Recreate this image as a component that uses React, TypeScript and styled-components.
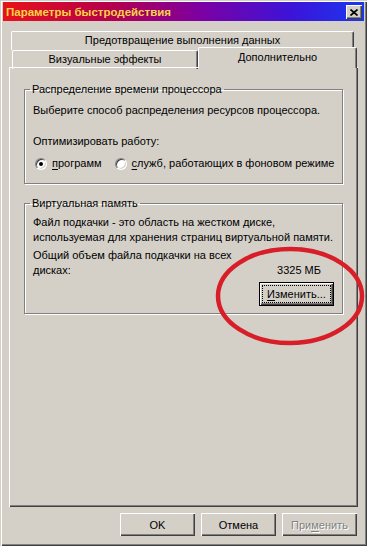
import styled, { createGlobalStyle } from 'styled-components';

const face = '#d4d0c8';
const shadow = '#808080';
const darkShadow = '#404040';

const GlobalStyle = createGlobalStyle`
  html, body {
    margin: 0;
    padding: 0;
    background: ${face};
  }
  body {
    font-family: 'Liberation Sans', Arial, sans-serif;
    font-size: 11px;
    color: #000;
  }
`;

const Window = styled.div`
  position: relative;
  width: 367px;
  height: 546px;
  box-sizing: border-box;
  padding: 2px 3px 3px 3px;
  background: ${face};
  box-shadow: inset 1px 1px 0 ${face}, inset 2px 2px 0 #fff, inset -1px -1px 0 ${darkShadow},
    inset -2px -2px 0 ${shadow};
  display: flex;
  flex-direction: column;
`;

const TitleBar = styled.div`
  height: 19px;
  display: flex;
  align-items: center;
  justify-content: space-between;
  padding: 0 2px 0 3px;
  background: linear-gradient(90deg, #e8121a 0%, #b4004c 30%, #7c00a4 55%, #3c14d8 80%, #1a38f0 100%);
`;

const TitleText = styled.span`
  color: #f8d448;
  font-weight: bold;
  font-size: 11.5px;
`;

const CloseButton = styled.button`
  width: 16px;
  height: 14px;
  margin-top: 1px;
  padding: 0;
  border: none;
  background: ${face};
  box-shadow: inset 1px 1px 0 #fff, inset -1px -1px 0 ${darkShadow}, inset -2px -2px 0 ${shadow};
  display: flex;
  align-items: center;
  justify-content: center;
`;

const Body = styled.div`
  display: flex;
  flex-direction: column;
  padding: 10px 6px 0;
`;

const TabRow = styled.div<{ $offset: number; $height: number }>`
  display: flex;
  height: ${(p) => p.$height}px;
  padding-left: ${(p) => p.$offset}px;
`;

const Tab = styled.div<{ $width: number; $selected?: boolean }>`
  position: ${(p) => (p.$selected ? 'relative' : 'static')};
  z-index: ${(p) => (p.$selected ? 2 : 'auto')};
  width: ${(p) => p.$width}px;
  height: ${(p) => (p.$selected ? 21 : 19)}px;
  margin-top: ${(p) => (p.$selected ? -3 : 0)}px;
  box-sizing: border-box;
  background: ${face};
  border-top: 1px solid #fff;
  border-left: 1px solid #fff;
  border-right: 1px solid ${darkShadow};
  border-radius: 2px 2px 0 0;
  box-shadow: inset -1px 0 0 ${shadow};
  display: flex;
  align-items: center;
  justify-content: center;
  padding-bottom: ${(p) => (p.$selected ? 3 : 2)}px;
  white-space: nowrap;
`;

const Panel = styled.div`
  height: 440px;
  box-sizing: border-box;
  padding: 15px 15px;
  box-shadow: inset 1px 1px 0 #fff, inset -1px -1px 0 ${darkShadow}, inset -2px -2px 0 ${shadow};
  display: flex;
  flex-direction: column;
  gap: 12px;
`;

const GroupBox = styled.fieldset`
  margin: 0;
  padding: 0 8px 0;
  border: 1px solid ${shadow};
  box-shadow: inset 1px 1px 0 #fff, 1px 1px 0 #fff;
  min-width: 0;
`;

const Legend = styled.legend`
  padding: 0 2px;
  margin-left: -3px;
  line-height: 14px;
`;

const Line = styled.p<{ $top: number }>`
  margin: ${(p) => p.$top}px 0 0;
  line-height: 15px;
  white-space: nowrap;
`;

const RadioRow = styled.div`
  display: flex;
  align-items: center;
  margin: 7px 0 12px 2px;
  line-height: 15px;
  white-space: nowrap;
`;

const RadioLabel = styled.label`
  display: flex;
  align-items: center;
  gap: 5px;
  margin-right: 13px;
`;

const RadioCircle = styled.span<{ $checked?: boolean }>`
  width: 12px;
  height: 12px;
  box-sizing: border-box;
  border-radius: 50%;
  background: #fff;
  border: 1px solid;
  border-color: ${shadow} #fff #fff ${shadow};
  box-shadow: inset 1px 1px 0 ${darkShadow}, inset -1px -1px 0 ${face};
  display: flex;
  align-items: center;
  justify-content: center;

  &::after {
    content: '';
    width: 4px;
    height: 4px;
    border-radius: 50%;
    background: #000;
    display: ${(p) => (p.$checked ? 'block' : 'none')};
  }
`;

const Accel = styled.span`
  text-decoration: underline;
  text-underline-offset: 2px;
`;

const TotalRow = styled.div`
  display: flex;
  justify-content: space-between;
  align-items: flex-end;
  margin-top: 3px;
  line-height: 15px;
`;

const TotalLabel = styled.span`
  width: 215px;
`;

const TotalValue = styled.span`
  margin-right: 13px;
`;

const ActionRow = styled.div<{ $gap: number }>`
  display: flex;
  justify-content: flex-end;
  gap: ${(p) => p.$gap}px;
`;

const ChangeRow = styled(ActionRow)`
  margin: 4px 0 7px;
`;

const Button = styled.button<{ $default?: boolean; $disabled?: boolean }>`
  width: 75px;
  height: ${(p) => (p.$default ? 24 : 23)}px;
  padding: 0;
  font-family: 'Liberation Sans', Arial, sans-serif;
  font-size: 11px;
  color: ${(p) => (p.$disabled ? shadow : '#000')};
  text-shadow: ${(p) => (p.$disabled ? '1px 1px 0 #fff' : 'none')};
  background: ${face};
  border: ${(p) => (p.$default ? '1px solid #000' : 'none')};
  box-shadow: inset 1px 1px 0 #fff, inset -1px -1px 0 ${darkShadow}, inset -2px -2px 0 ${shadow};
  display: flex;
  align-items: center;
  justify-content: center;
`;

const FocusRect = styled.span`
  border: 1px dotted #000;
  padding: 1px 4px;
  line-height: 14px;
`;

const ButtonBar = styled(ActionRow)`
  margin-top: 6px;
  padding-right: 1px;
`;

const Annotation = styled.svg`
  position: absolute;
  left: 214px;
  top: 246px;
  pointer-events: none;
`;

export default function App() {
  return (
    <Window>
      <GlobalStyle />
      <TitleBar>
        <TitleText>Параметры быстродействия</TitleText>
        <CloseButton aria-label="Закрыть">
          <svg width="8" height="7" viewBox="0 0 8 7">
            <path d="M0.5 0.5 L7.5 6.5 M7.5 0.5 L0.5 6.5" stroke="#000" strokeWidth="1.7" fill="none" />
          </svg>
        </CloseButton>
      </TitleBar>
      <Body>
        <TabRow $offset={2} $height={19}>
          <Tab $width={343}>Предотвращение выполнения данных</Tab>
        </TabRow>
        <TabRow $offset={3} $height={17}>
          <Tab $width={186}>Визуальные эффекты</Tab>
          <Tab $width={159} $selected>
            Дополнительно
          </Tab>
        </TabRow>
        <Panel>
          <GroupBox>
            <Legend>Распределение времени процессора</Legend>
            <Line $top={7}>Выберите способ распределения ресурсов процессора.</Line>
            <Line $top={16}>Оптимизировать работу:</Line>
            <RadioRow>
              <RadioLabel>
                <RadioCircle $checked />
                <span>
                  <Accel>п</Accel>рограмм
                </span>
              </RadioLabel>
              <RadioLabel>
                <RadioCircle />
                <span>
                  <Accel>с</Accel>лужб, работающих в фоновом режиме
                </span>
              </RadioLabel>
            </RadioRow>
          </GroupBox>
          <GroupBox>
            <Legend>Виртуальная память</Legend>
            <Line $top={5}>
              Файл подкачки - это область на жестком диске,
              <br />
              используемая для хранения страниц виртуальной памяти.
            </Line>
            <TotalRow>
              <TotalLabel>Общий объем файла подкачки на всех дисках:</TotalLabel>
              <TotalValue>3325 МБ</TotalValue>
            </TotalRow>
            <ChangeRow $gap={0}>
              <Button $default>
                <FocusRect>
                  <Accel>И</Accel>зменить...
                </FocusRect>
              </Button>
            </ChangeRow>
          </GroupBox>
        </Panel>
        <ButtonBar $gap={6}>
          <Button>OK</Button>
          <Button>Отмена</Button>
          <Button $disabled>
            <span>
              При<Accel>м</Accel>енить
            </span>
          </Button>
        </ButtonBar>
      </Body>
      <Annotation width="152" height="102" viewBox="0 0 152 102">
        <ellipse cx="76" cy="50" rx="72" ry="47" fill="none" stroke="#d81e28" strokeWidth="4.5" />
      </Annotation>
    </Window>
  );
}
